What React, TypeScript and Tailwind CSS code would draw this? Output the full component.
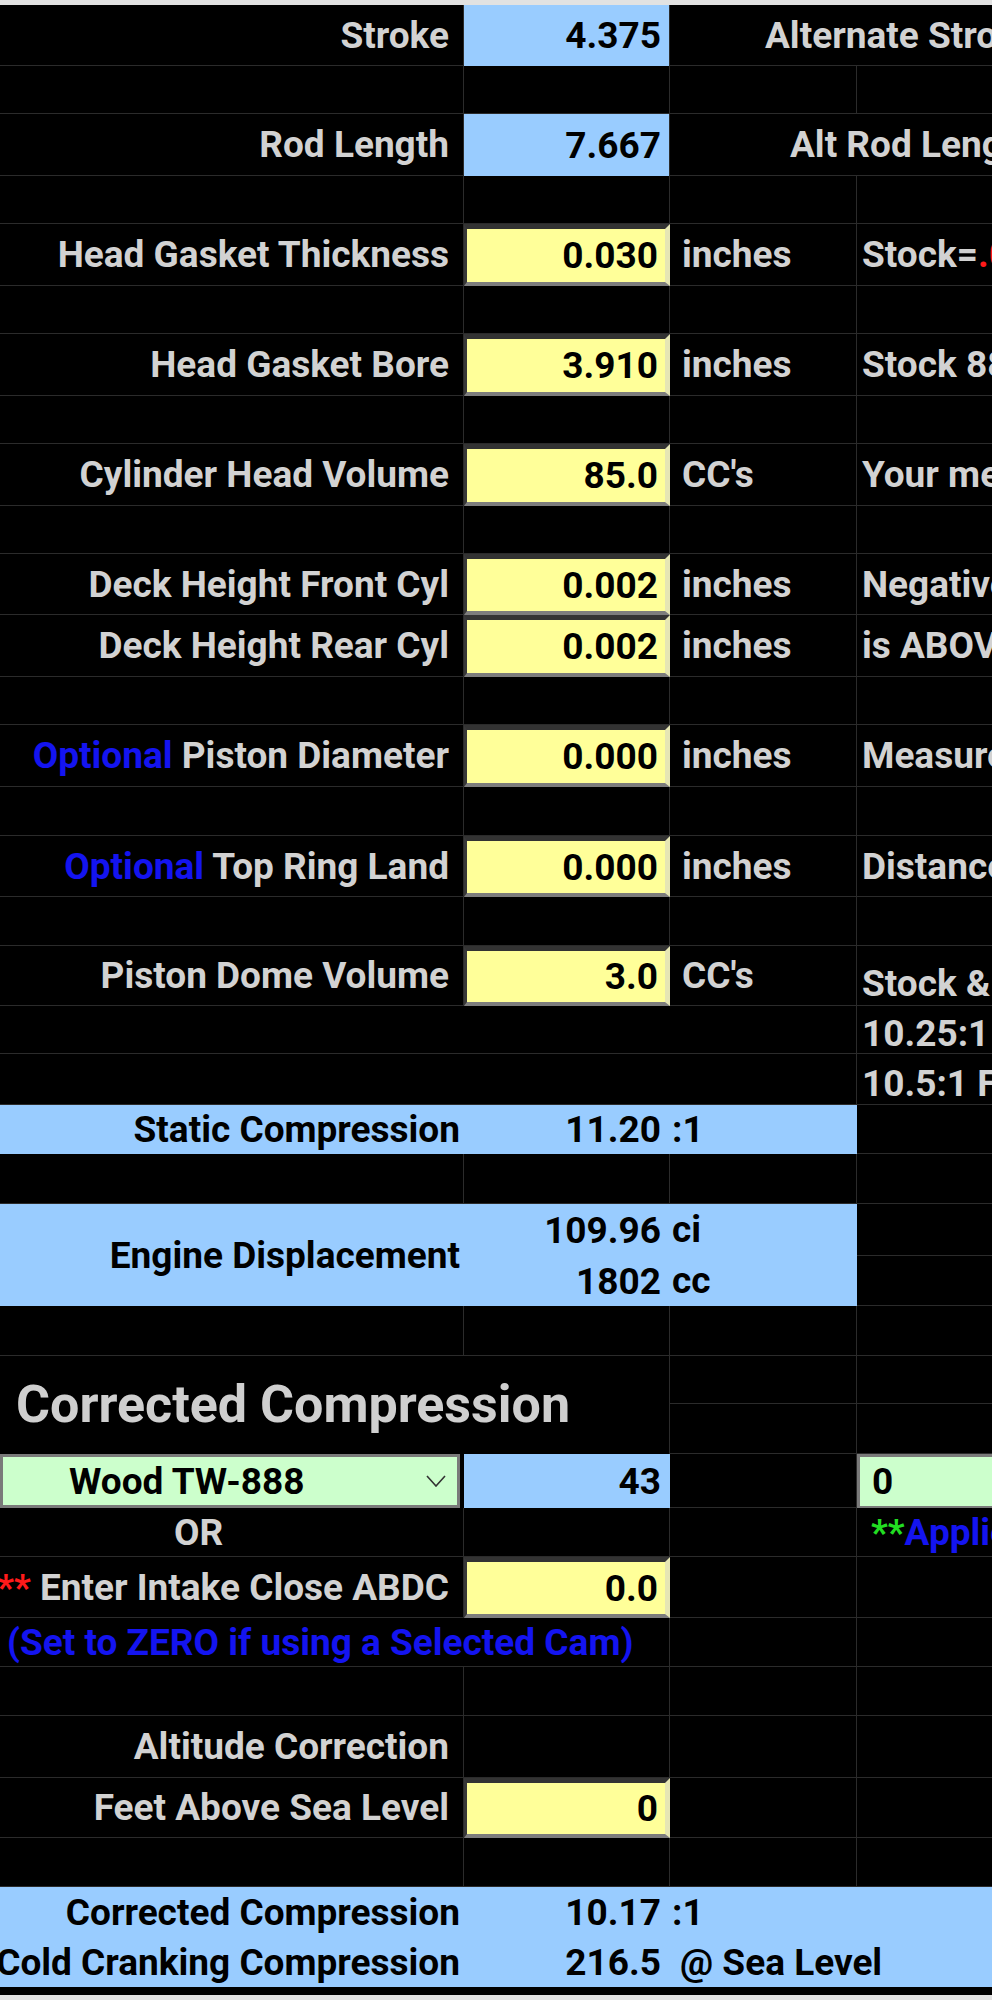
import React from "react";

const LINE = "border-[#2b2b2b]";
const LAB = "text-[37px] leading-none text-[#d2d2d2] whitespace-nowrap";
const VAL = "text-[37px] leading-none text-black whitespace-nowrap";

function CA({ children, cls = "" }: { children?: React.ReactNode; cls?: string }) {
  return (
    <div className={`w-[464px] shrink-0 h-full border-r border-b ${LINE} flex items-center justify-end pr-[14px] ${cls}`}>
      {children}
    </div>
  );
}
function CB({ children, cls = "" }: { children?: React.ReactNode; cls?: string }) {
  return (
    <div className={`w-[206px] shrink-0 h-full border-r border-b ${LINE} flex items-center justify-end pr-[8px] ${cls}`}>
      {children}
    </div>
  );
}
function CC({ children, cls = "" }: { children?: React.ReactNode; cls?: string }) {
  return (
    <div className={`w-[187px] shrink-0 h-full border-r border-b ${LINE} flex items-center justify-start pl-[12px] ${cls}`}>
      {children}
    </div>
  );
}
function CD({ children, cls = "" }: { children?: React.ReactNode; cls?: string }) {
  return (
    <div className={`w-[135px] shrink-0 h-full border-b ${LINE} flex items-center justify-start pl-[5px] ${cls}`}>
      {children}
    </div>
  );
}

function Yellow({ v }: { v: string }) {
  return (
    <div className="w-[206px] shrink-0 h-full bg-[#ffff99] border-t-[5px] border-l-[3px] border-b-[4px] border-r-[5px] border-t-[#333333] border-l-[#383838] border-b-[#7d7d7d] border-r-[#e6e6b4] flex items-center justify-end pr-[7px]">
      <span className={VAL}>{v}</span>
    </div>
  );
}

function Empty({ h }: { h: string }) {
  return (
    <div className={`flex ${h}`}>
      <CA />
      <CB />
      <CC />
      <CD />
    </div>
  );
}

function InputRow({
  h,
  label,
  value,
  unit,
  note,
  noteCls = "",
}: {
  h: string;
  label: React.ReactNode;
  value: string;
  unit: string;
  note?: React.ReactNode;
  noteCls?: string;
}) {
  return (
    <div className={`flex ${h}`}>
      <CA>
        <span className={LAB}>{label}</span>
      </CA>
      <Yellow v={value} />
      <CC>
        <span className={LAB}>{unit}</span>
      </CC>
      <CD cls={noteCls}>
        <span className={LAB}>{note}</span>
      </CD>
    </div>
  );
}

export default function App() {
  return (
    <div className="w-[992px] h-[2000px] overflow-hidden bg-black font-[family-name:Roboto,sans-serif] font-bold">
      <div className="h-[5px] bg-[#e2e2e2]" />

      {/* Stroke */}
      <div className="flex h-[61px]">
        <CA>
          <span className={LAB}>Stroke</span>
        </CA>
        <CB cls="bg-[#99ccff] border-b-0">
          <span className={VAL}>4.375</span>
        </CB>
        <div className={`w-[322px] shrink-0 h-full border-b ${LINE} flex items-center pl-[95px]`}>
          <span className={LAB}>Alternate Stroke</span>
        </div>
      </div>
      <Empty h="h-[48px]" />

      {/* Rod length */}
      <div className="flex h-[62px]">
        <CA>
          <span className={LAB}>Rod Length</span>
        </CA>
        <CB cls="bg-[#99ccff] border-b-0">
          <span className={VAL}>7.667</span>
        </CB>
        <div className={`w-[322px] shrink-0 h-full border-b ${LINE} flex items-center pl-[120px]`}>
          <span className={LAB}>Alt Rod Length</span>
        </div>
      </div>
      <Empty h="h-[48px]" />

      <InputRow
        h="h-[62px]"
        label="Head Gasket Thickness"
        value="0.030"
        unit="inches"
        note={
          <>
            Stock=<span className="text-[#ff1a1a]">.040"</span>
          </>
        }
      />
      <Empty h="h-[48px]" />
      <InputRow h="h-[62px]" label="Head Gasket Bore" value="3.910" unit="inches" note={'Stock 88" = 3.810'} />
      <Empty h="h-[48px]" />
      <InputRow h="h-[62px]" label="Cylinder Head Volume" value="85.0" unit="CC's" note="Your measured CC's" />
      <Empty h="h-[48px]" />
      <InputRow h="h-[61px]" label="Deck Height Front Cyl" value="0.002" unit="inches" note="Negative number" />
      <InputRow h="h-[62px]" label="Deck Height Rear Cyl" value="0.002" unit="inches" note="is ABOVE deck" />
      <Empty h="h-[48px]" />
      <InputRow
        h="h-[62px]"
        label={
          <>
            <span className="text-[#1414f0]">Optional</span> Piston Diameter
          </>
        }
        value="0.000"
        unit="inches"
        note="Measure at skirt"
      />
      <Empty h="h-[49px]" />
      <InputRow
        h="h-[61px]"
        label={
          <>
            <span className="text-[#1414f0]">Optional</span> Top Ring Land
          </>
        }
        value="0.000"
        unit="inches"
        note="Distance to top ring"
      />
      <Empty h="h-[49px]" />
      <InputRow h="h-[60px]" label="Piston Dome Volume" value="3.0" unit="CC's" note="Stock & SE pistons" noteCls="pt-[16px]" />
      <div className="flex h-[48px]">
        <div className={`w-[857px] shrink-0 h-full border-r border-b ${LINE}`} />
        <CD cls="pt-[8px]">
          <span className={LAB}>10.25:1 Factory</span>
        </CD>
      </div>
      <div className="flex h-[51px]">
        <div className={`w-[857px] shrink-0 h-full border-r border-b ${LINE}`} />
        <CD cls="pt-[8px]">
          <span className={LAB}>10.5:1 Factory</span>
        </CD>
      </div>

      {/* Static compression */}
      <div className="flex h-[49px]">
        <div className="w-[857px] shrink-0 h-full bg-[#99ccff] flex items-center">
          <div className="w-[464px] flex justify-end pr-[4px]">
            <span className={VAL}>Static Compression</span>
          </div>
          <div className="w-[206px] flex justify-end pr-[9px]">
            <span className={VAL}>11.20</span>
          </div>
          <div className="pl-[2px]">
            <span className={VAL}>:1</span>
          </div>
        </div>
        <CD />
      </div>
      <Empty h="h-[50px]" />

      {/* Engine displacement */}
      <div className="flex h-[102px]">
        <div className="w-[857px] shrink-0 h-full bg-[#99ccff] flex">
          <div className="w-[464px] h-full flex items-center justify-end pr-[4px]">
            <span className={VAL}>Engine Displacement</span>
          </div>
          <div className="flex flex-col">
            <div className="h-[52px] flex items-center">
              <div className="w-[206px] flex justify-end pr-[9px]">
                <span className={VAL}>109.96</span>
              </div>
              <div className="pl-[2px]">
                <span className={VAL}>ci</span>
              </div>
            </div>
            <div className="h-[50px] flex items-center">
              <div className="w-[206px] flex justify-end pr-[9px]">
                <span className={VAL}>1802</span>
              </div>
              <div className="pl-[2px]">
                <span className={VAL}>cc</span>
              </div>
            </div>
          </div>
        </div>
        <div className="w-[135px] shrink-0 flex flex-col">
          <div className={`h-[52px] border-b ${LINE}`} />
          <div className={`h-[50px] border-b ${LINE}`} />
        </div>
      </div>
      <Empty h="h-[50px]" />

      {/* Corrected compression header */}
      <div className="flex h-[98px]">
        <div className={`w-[670px] shrink-0 h-full border-r ${LINE} flex items-center pl-[16px]`}>
          <span className="text-[52px] leading-none text-[#cfcfcf] whitespace-nowrap">Corrected Compression</span>
        </div>
        <div className="flex flex-col">
          <div className="flex h-[48px]">
            <CC />
            <CD />
          </div>
          <div className="flex h-[50px]">
            <CC />
            <CD />
          </div>
        </div>
      </div>

      {/* Cam select */}
      <div className="flex h-[54px]">
        <div className={`w-[464px] shrink-0 h-full border-r-[4px] border-r-black`}>
          <div className="h-full bg-[#ccffcc] border-[3px] border-[#7a7a7a] flex items-center relative pl-[66px]">
            <span className={VAL}>Wood TW-888</span>
            <svg className="absolute right-[11px] top-1/2 -translate-y-1/2" width="20" height="12" viewBox="0 0 20 12">
              <polyline points="1,1 10,11 19,1" fill="none" stroke="#333" strokeWidth="1.6" />
            </svg>
          </div>
        </div>
        <div className="w-[206px] shrink-0 h-full bg-[#99ccff] flex items-center justify-end pr-[9px]">
          <span className={VAL}>43</span>
        </div>
        <CC />
        <div className="w-[135px] shrink-0 h-full bg-[#ccffcc] border-l-[3px] border-t-[3px] border-b-[2px] border-[#7a7a7a] flex items-center pl-[12px]">
          <span className={VAL}>0</span>
        </div>
      </div>
      <div className="flex h-[49px]">
        <CA cls="justify-start pl-[174px]">
          <span className={LAB}>OR</span>
        </CA>
        <CB />
        <CC />
        <CD cls="pl-[14px]">
          <span className="text-[37px] leading-none whitespace-nowrap">
            <span className="text-[#22dd22]">**</span>
            <span className="text-[#1414f0]">Applies to all</span>
          </span>
        </CD>
      </div>
      <div className="flex h-[61px]">
        <CA>
          <span className={LAB}>
            <span className="text-[#ff1a1a]">**</span> Enter Intake Close ABDC
          </span>
        </CA>
        <Yellow v="0.0" />
        <CC />
        <CD />
      </div>
      <div className="flex h-[49px]">
        <div className={`w-[670px] shrink-0 h-full border-r border-b ${LINE} flex items-center pl-[7px]`}>
          <span className="text-[37px] leading-none text-[#1414f0] whitespace-nowrap">(Set to ZERO if using a Selected Cam)</span>
        </div>
        <CC />
        <CD />
      </div>
      <Empty h="h-[49px]" />
      <div className="flex h-[62px]">
        <CA>
          <span className={LAB}>Altitude Correction</span>
        </CA>
        <CB />
        <CC />
        <CD />
      </div>
      <div className="flex h-[60px]">
        <CA>
          <span className={LAB}>Feet Above Sea Level</span>
        </CA>
        <Yellow v="0" />
        <CC />
        <CD />
      </div>
      <Empty h="h-[49px]" />

      {/* Results */}
      <div className="h-[100px] bg-[#99ccff] flex flex-col">
        <div className="h-[51px] flex items-center">
          <div className="w-[464px] shrink-0 flex justify-end pr-[4px]">
            <span className={VAL}>Corrected Compression</span>
          </div>
          <div className="w-[206px] shrink-0 flex justify-end pr-[9px]">
            <span className={VAL}>10.17</span>
          </div>
          <div className="pl-[2px]">
            <span className={VAL}>:1</span>
          </div>
        </div>
        <div className="h-[49px] flex items-center">
          <div className="w-[464px] shrink-0 flex justify-end pr-[4px]">
            <span className={VAL}>Cold Cranking Compression</span>
          </div>
          <div className="w-[206px] shrink-0 flex justify-end pr-[9px]">
            <span className={VAL}>216.5</span>
          </div>
          <div className="pl-[10px]">
            <span className={VAL}>@ Sea Level</span>
          </div>
        </div>
      </div>
      <div className="h-[8px] bg-black" />
      <div className="h-[5px] bg-[#e2e2e2]" />
    </div>
  );
}
